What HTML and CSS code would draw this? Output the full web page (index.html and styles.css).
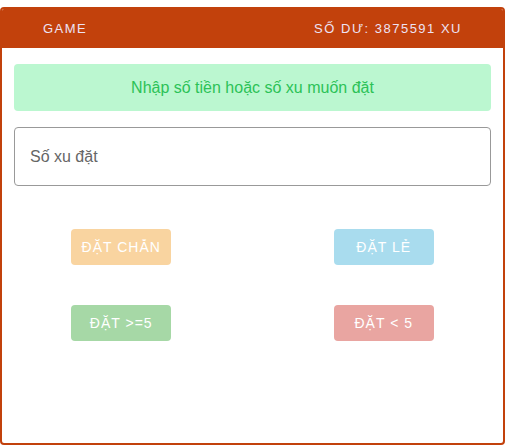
FILE: index.html
```html
<!DOCTYPE html>
<html lang="vi">
<head>
<meta charset="utf-8">
<link rel="stylesheet" href="styles.css">
</head>
<body>
<div class="card">
  <div class="header">
    <span class="title">GAME</span>
    <span class="balance">SỐ DƯ: 3875591 XU</span>
  </div>
  <div class="content">
    <div class="alert">Nhập số tiền hoặc số xu muốn đặt</div>
    <input class="amount" type="text" placeholder="Số xu đặt">
    <div class="actions">
      <button class="btn btn-orange">ĐẶT CHẴN</button>
      <button class="btn btn-blue">ĐẶT LẺ</button>
      <button class="btn btn-green">ĐẶT &gt;=5</button>
      <button class="btn btn-red">ĐẶT &lt; 5</button>
    </div>
  </div>
</div>
</body>
</html>
```
FILE: styles.css
```css
* { box-sizing: border-box; }
html, body { margin: 0; padding: 0; background: #fff; }
body { font-family: "Liberation Sans", Arial, sans-serif; }

.card {
  margin-top: 7px;
  width: 505px;
  height: 438px;
  border: 2px solid #c2410c;
  border-radius: 4px;
  overflow: hidden;
}

.header {
  height: 41px;
  margin: -2px -2px 0;
  background: #c2410c;
  border-radius: 4px 4px 0 0;
  display: flex;
  justify-content: space-between;
  align-items: center;
  padding: 2px 43px 0 43px;
  color: #ede2f4;
  font-size: 13px;
  letter-spacing: 1.5px;
}

.content {
  padding: 16px 12px 0 12px;
  display: flex;
  flex-direction: column;
}

.alert {
  height: 47px;
  background: #bbf7d0;
  color: #2cc257;
  border-radius: 4px;
  font-size: 16px;
  display: flex;
  align-items: center;
  justify-content: center;
}

.amount {
  margin-top: 16px;
  height: 59px;
  width: 100%;
  border: 1px solid #999;
  border-radius: 4px;
  padding: 0 15px;
  font-family: "Liberation Sans", Arial, sans-serif;
  font-size: 16px;
  color: #555;
  outline: none;
}
.amount::placeholder { color: #666; }

.actions {
  margin-top: 43px;
  display: grid;
  grid-template-columns: 1fr 1fr;
  column-gap: 48px;
  row-gap: 40px;
  justify-items: center;
}

.btn {
  width: 100px;
  height: 36px;
  border: none;
  border-radius: 4px;
  color: #fff;
  font-family: "Liberation Sans", Arial, sans-serif;
  font-size: 14px;
  letter-spacing: 1px;
  padding: 0;
}
.btn-orange { background: #f9d4a0; }
.btn-blue { background: #a9dcee; }
.btn-green { background: #a6d8a6; }
.btn-red { background: #e9a5a1; }
```
